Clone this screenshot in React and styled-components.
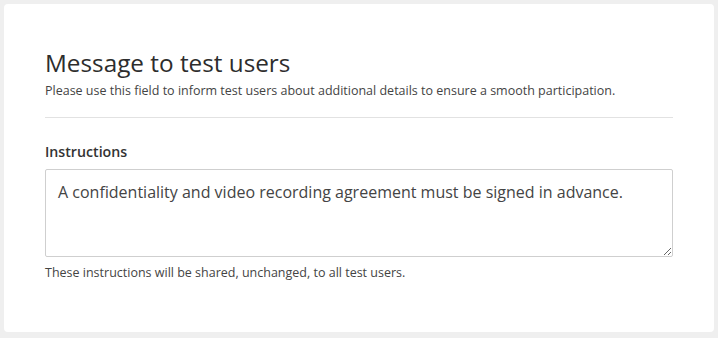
import React from 'react';
import styled, { createGlobalStyle } from 'styled-components';

const Global = createGlobalStyle`
  html, body {
    margin: 0;
    padding: 0;
    background: #efefef;
    font-family: "Open Sans", "Liberation Sans", sans-serif;
  }
`;

const Page = styled.div`
  padding: 4px;
  width: 718px;
  height: 338px;
  box-sizing: border-box;
`;

const Card = styled.section`
  background: #ffffff;
  border-radius: 4px;
  width: 710px;
  height: 328px;
  box-sizing: border-box;
  padding: 44px 41px 0 41px;
  color: #333;
`;

const Title = styled.h2`
  margin: 0;
  font-size: 24.3px;
  font-weight: 400;
  line-height: 30px;
  color: #2d2d2d;
`;

const Subtitle = styled.p`
  margin: 4px 0 0;
  font-size: 12.5px;
  line-height: 17px;
  color: #444;
`;

const Divider = styled.hr`
  border: 0;
  border-top: 1px solid #e2e2e2;
  margin: 18px 0 0;
`;

const Field = styled.div`
  display: flex;
  flex-direction: column;
  margin-top: 24px;
`;

const Label = styled.label`
  font-size: 14.2px;
  font-weight: 600;
  line-height: 19px;
  color: #333;
`;

const TextArea = styled.textarea`
  margin-top: 8px;
  height: 88px;
  box-sizing: border-box;
  border: 1px solid #cfcfcf;
  border-radius: 2px;
  padding: 11px 12px;
  font-family: inherit;
  font-size: 16px;
  line-height: 22px;
  color: #444;
  resize: vertical;
  outline: none;
`;

const Help = styled.p`
  margin: 7px 0 0;
  font-size: 12.5px;
  line-height: 17px;
  color: #444;
`;

export default function App() {
  return (
    <>
      <Global />
      <Page>
        <Card>
          <Title>Message to test users</Title>
          <Subtitle>
            Please use this field to inform test users about additional details to ensure a smooth participation.
          </Subtitle>
          <Divider />
          <Field>
            <Label htmlFor="instructions">Instructions</Label>
            <TextArea
              id="instructions"
              defaultValue="A confidentiality and video recording agreement must be signed in advance."
            />
            <Help>These instructions will be shared, unchanged, to all test users.</Help>
          </Field>
        </Card>
      </Page>
    </>
  );
}
